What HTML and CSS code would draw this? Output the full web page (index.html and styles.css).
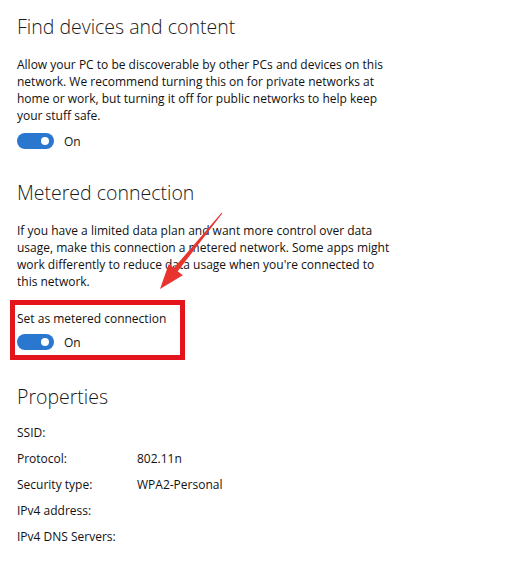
FILE: index.html
```html
<!DOCTYPE html>
<html lang="en">
<head>
  <meta charset="UTF-8">
  <meta name="viewport" content="width=device-width, initial-scale=1.0">
  <title>Network settings</title>
  <link rel="stylesheet" href="styles.css">
</head>
<body>
  <div class="page">
    <div class="group discover">
      <h2 class="title">Find devices and content</h2>
      <p class="desc">Allow your PC to be discoverable by other PCs and devices on this network. We recommend turning this on for private networks at home or work, but turning it off for public networks to help keep your stuff safe.</p>
      <div class="switch">
        <span class="toggle"><i></i></span>
        <span class="state">On</span>
      </div>
    </div>

    <div class="group metered">
      <h2 class="title">Metered connection</h2>
      <p class="desc">If you have a limited data plan and want more control over data usage, make this connection a metered network. Some apps might work differently to reduce data usage when you're connected to this network.</p>
      <div class="mark">
        <div class="label">Set as metered connection</div>
        <div class="switch">
          <span class="toggle"><i></i></span>
          <span class="state">On</span>
        </div>
      </div>
    </div>

    <div class="group properties">
      <h2 class="title">Properties</h2>
      <div class="props">
        <span>SSID:</span><span></span>
        <span>Protocol:</span><span>802.11n</span>
        <span>Security type:</span><span>WPA2-Personal</span>
        <span>IPv4 address:</span><span></span>
        <span>IPv4 DNS Servers:</span><span></span>
      </div>
    </div>

    <!-- red arrow drawn over the text -->
    <svg class="arrow" width="510" height="567" viewBox="0 0 510 567">
      <polygon fill="#e8332f" points="221.6,212.7 173.9,268 168.8,263.9 160,289 182.8,275.3 177.7,271.2 222.4,213.3"/>
    </svg>
  </div>
</body>
</html>
```

FILE: styles.css
```css
*{
  margin: 0;
  padding: 0;
}
body{
  background: #fff;
  color: #111;
  font-family: "Open Sans", "Noto Sans", sans-serif;
  font-size: 12px;
}
.page{
  position: relative;
  width: 510px;
  height: 567px;
  padding: 12px 0 0 17px;
  box-sizing: border-box;
  overflow: hidden;
}
.discover{
  margin-bottom: 28px;
}
.metered{
  margin-bottom: 22px;
}
.title{
  font-weight: 300;
  font-size: 19.5px;
  line-height: 30px;
  color: #1a1a1a;
  margin-bottom: 14px;
}
.properties .title{
  margin-bottom: 12px;
}
.desc{
  width: 380px;
  line-height: 17px;
  margin-bottom: 8px;
}
.switch{
  display: flex;
  align-items: center;
  gap: 10px;
  height: 18px;
}
.toggle{
  width: 37px;
  height: 16px;
  border-radius: 8px;
  background: #2a77d0;
  display: flex;
  align-items: center;
  justify-content: flex-end;
  padding-right: 5px;
  box-sizing: border-box;
}
.toggle i{
  width: 8px;
  height: 8px;
  border-radius: 50%;
  background: #fff;
}
.mark{
  width: 175px;
  margin-top: 10px;
  margin-left: -7px;
  border: 5px solid #e3141c;
  padding: 5px 0 4px 2px;
  box-sizing: border-box;
}
.label{
  line-height: 17px;
  margin-bottom: 6px;
}
.props{
  display: grid;
  grid-template-columns: 120px auto;
  row-gap: 9px;
  line-height: 17px;
}
.arrow{
  position: absolute;
  left: 0;
  top: 0;
  pointer-events: none;
}
```
